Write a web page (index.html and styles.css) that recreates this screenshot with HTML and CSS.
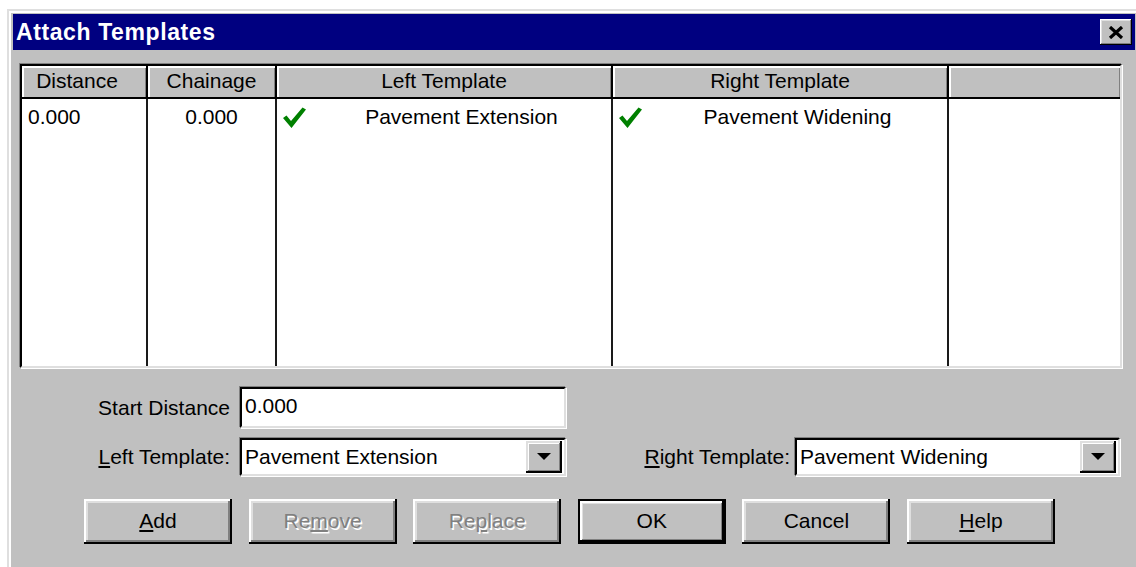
FILE: index.html
```html
<!DOCTYPE html>
<html lang="en">
<head>
<meta charset="utf-8">
<title>Attach Templates</title>
<link rel="stylesheet" href="styles.css">
</head>
<body>
<div class="window">
  <div class="titlebar">
    <span class="title">Attach Templates</span>
    <button class="close" type="button" aria-label="Close">
      <svg width="16" height="13" viewBox="0 0 16 13"><path d="M2 1 L14 12 M14 1 L2 12" stroke="#000" stroke-width="3.2" fill="none"/></svg>
    </button>
  </div>

  <div class="content">
    <div class="list">
      <div class="list-head">
        <div class="hcell c-dist">Distance</div>
        <div class="hcell c-chain">Chainage</div>
        <div class="hcell c-tpl">Left Template</div>
        <div class="hcell c-tpl">Right Template</div>
        <div class="hcell c-rest"></div>
      </div>
      <div class="list-body">
        <div class="col c-dist"><div class="cell left">0.000</div></div>
        <div class="col c-chain"><div class="cell center">0.000</div></div>
        <div class="col c-tpl">
          <div class="cell tpl">
            <svg class="check" width="23" height="22" viewBox="0 0 23 22"><polygon points="0,11 3.5,8.5 8,14 19.5,0.5 23,2.5 8.5,21" fill="#008000"/></svg>
            <span class="tpl-name">Pavement Extension</span>
          </div>
        </div>
        <div class="col c-tpl">
          <div class="cell tpl">
            <svg class="check" width="23" height="22" viewBox="0 0 23 22"><polygon points="0,11 3.5,8.5 8,14 19.5,0.5 23,2.5 8.5,21" fill="#008000"/></svg>
            <span class="tpl-name">Pavement Widening</span>
          </div>
        </div>
        <div class="col c-rest"></div>
      </div>
    </div>

    <div class="form-row first">
      <label class="lbl">Start Distance</label>
      <div class="field edit">0.000</div>
    </div>

    <div class="form-row second">
      <label class="lbl"><u>L</u>eft Template:</label>
      <div class="field combo">
        <span class="combo-text">Pavement Extension</span>
        <span class="drop"><svg width="14" height="8" viewBox="0 0 14 8"><polygon points="0,0 14,0 7,7" fill="#000"/></svg></span>
      </div>
      <label class="lbl-right"><u>R</u>ight Template:</label>
      <div class="field combo wide">
        <span class="combo-text">Pavement Widening</span>
        <span class="drop"><svg width="14" height="8" viewBox="0 0 14 8"><polygon points="0,0 14,0 7,7" fill="#000"/></svg></span>
      </div>
    </div>

    <div class="buttons">
      <button class="btn" type="button"><u>A</u>dd</button>
      <button class="btn disabled" type="button">Re<u>m</u>ove</button>
      <button class="btn disabled" type="button">Re<u>p</u>lace</button>
      <button class="btn default" type="button">OK</button>
      <button class="btn" type="button">Cancel</button>
      <button class="btn" type="button"><u>H</u>elp</button>
    </div>
  </div>
</div>
</body>
</html>
```

FILE: styles.css
```css
* { box-sizing: border-box; }

html, body {
  margin: 0;
  padding: 0;
  background: #fff;
  overflow: hidden;
}

body {
  font-family: "Liberation Sans", Arial, sans-serif;
  font-size: 21px;
  color: #000;
}

u { text-decoration: underline; text-underline-offset: 2px; text-decoration-thickness: 2px; }

/* dialog frame */
.window {
  margin: 9px 0 0 7px;
  height: 558px;
  background: #c0c0c0;
  border-top: 2px solid #dfdfdf;
  border-left: 2px solid #dfdfdf;
  box-shadow: inset 2px 2px 0 #fff;
  padding: 3px 1px 0 4px;
}

.titlebar {
  height: 36px;
  background: #000080;
  display: flex;
  align-items: center;
  justify-content: space-between;
  padding: 0 3px 0 3px;
}

.title {
  color: #fff;
  font-weight: bold;
  font-size: 23px;
  letter-spacing: 0.6px;
}

.close {
  width: 32px;
  height: 26px;
  padding: 0;
  border: none;
  background: #c0c0c0;
  display: flex;
  align-items: center;
  justify-content: center;
  box-shadow: inset -1px -1px 0 #000, inset 1px 1px 0 #fff, inset -2px -2px 0 #808080, inset 2px 2px 0 #dfdfdf;
}

.content {
  padding: 14px 0 0 7px;
}

/* list view */
.list {
  width: 1102px;
  height: 304px;
  border: 2px solid;
  border-color: #000 #dfdfdf #dfdfdf #000;
  box-shadow: -1px -1px 0 #808080, 1px 1px 0 #fff;
  background: #fff;
  display: flex;
  flex-direction: column;
}

.list-head {
  display: flex;
  height: 33px;
  border-bottom: 2px solid #000;
  background: #c0c0c0;
}

.hcell {
  display: flex;
  align-items: center;
  justify-content: center;
  border-right: 2px solid #000;
  box-shadow: inset 2px 2px 0 #fff, inset -1px 0 0 #808080;
  color: #000;
  padding-bottom: 1px;
}

.hcell.c-dist { padding-right: 14px; }

.c-dist { width: 126px; flex: none; }
.c-chain { width: 129px; flex: none; }
.c-tpl { width: 336px; flex: none; }
.c-rest { flex: 1; border-right: none; }

.list-body {
  flex: 1;
  display: flex;
}

.col {
  border-right: 2px solid #1a1a1a;
}
.col.c-rest { border-right: none; }

.cell {
  height: 36px;
  display: flex;
  align-items: center;
}
.cell.left { padding-left: 6px; }
.cell.center { justify-content: center; }
.cell.tpl { padding-left: 6px; }

.check { flex: none; margin-top: 1px; }

.tpl-name {
  flex: 1;
  text-align: center;
  padding-left: 6px;
}

/* form fields */
.form-row {
  display: flex;
  align-items: center;
  width: 1100px;
}
.form-row.first { margin-top: 19px; }
.form-row.second { margin-top: 10px; }

.lbl {
  width: 210px;
  text-align: right;
  margin-right: 10px;
}

.lbl-right {
  margin-left: auto;
  margin-right: 5px;
}

.field {
  background: #fff;
  border: 2px solid;
  border-color: #000 #dfdfdf #dfdfdf #000;
  box-shadow: -1px -1px 0 #808080, 1px 1px 0 #fff;
  display: flex;
  align-items: center;
  padding-left: 3px;
}

.edit {
  width: 326px;
  height: 41px;
  padding-bottom: 3px;
}

.combo {
  width: 326px;
  height: 38px;
  padding-right: 2px;
}
.combo.wide { width: 325px; }

.combo-text { flex: 1; }

.drop {
  width: 36px;
  height: 32px;
  background: #c0c0c0;
  display: flex;
  align-items: center;
  justify-content: center;
  box-shadow: inset -2px -2px 0 #000, inset 2px 2px 0 #dfdfdf, inset -3px -3px 0 #808080, inset 3px 3px 0 #fff;
}

/* push buttons */
.buttons {
  display: flex;
  gap: 16.6px;
  margin-top: 23px;
  padding-left: 64px;
}

.btn {
  width: 148px;
  height: 45px;
  padding: 0 0 2px;
  border: none;
  background: #c0c0c0;
  font-family: "Liberation Sans", Arial, sans-serif;
  font-size: 21px;
  color: #000;
  box-shadow: inset -2px -2px 0 #000, inset 2px 2px 0 #fff, inset -4px -4px 0 #808080, inset 4px 4px 0 #dfdfdf;
}

.btn.default {
  box-shadow: inset 0 0 0 2px #000, inset -4px -4px 0 #000, inset 4px 4px 0 #fff, inset -5px -5px 0 #808080, inset 5px 5px 0 #dfdfdf;
}

.btn.disabled {
  color: #808080;
  text-shadow: 1.5px 1.5px 0 #fff;
}
```
